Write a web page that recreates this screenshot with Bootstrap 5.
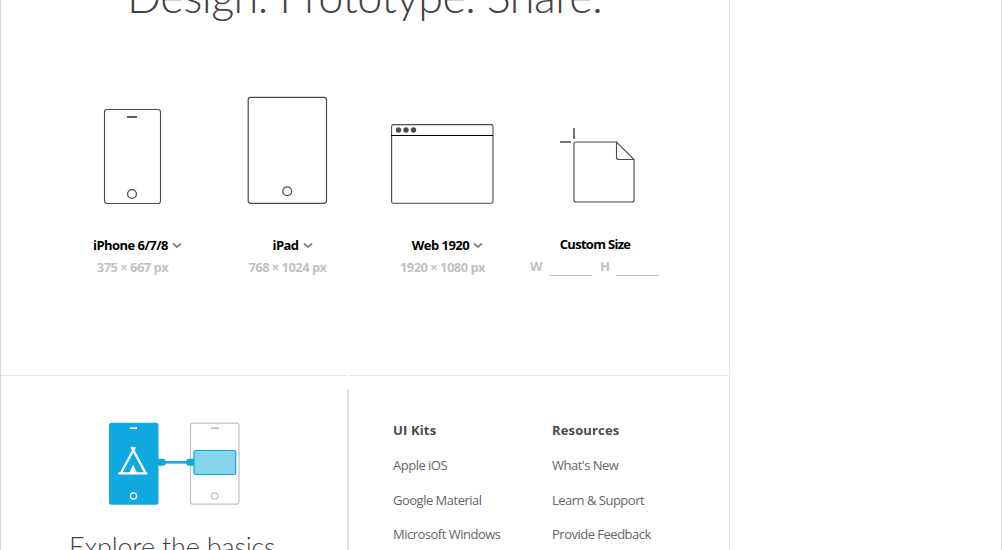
<!DOCTYPE html>
<html lang="en">
<head>
<meta charset="utf-8">
<meta name="viewport" content="width=device-width, initial-scale=1">
<title>Start screen</title>
<link href="https://cdn.jsdelivr.net/npm/bootstrap@5.3.0/dist/css/bootstrap.min.css" rel="stylesheet">
<style>
body{font-family:"Open Sans",sans-serif;background:#fff;color:#4b4b4b;height:550px}
svg{display:block}
.window{width:1002px;height:550px;border-left:1px solid #d6d6d6;border-right:1px solid #d6d6d6}
.start{width:729px;height:550px}
.presets{height:376px;border-right:1px solid #e8e8e8;border-bottom:1px solid #e8e8e8;border-bottom-right-radius:3px}
.hero-title{font-family:Lato,sans-serif;font-weight:300;font-size:45px;line-height:50px;height:50px;margin:-29px 0 0 126px;letter-spacing:-.58px;white-space:nowrap;color:#434343}
.devices{padding:69px 0 0 54px}
.device{width:155px;text-align:center;white-space:nowrap}
.device-name{font-size:13px;line-height:20px;font-weight:700;color:#000;margin-top:25px;padding-left:10px;letter-spacing:-.53px}
.device-size{font-size:13px;line-height:20px;font-weight:700;color:#c2c2c2;margin-top:2px;letter-spacing:-.55px}
.custom .device-name{margin-top:24px;padding:0 5px 0 0;letter-spacing:-.7px}
.size-field{height:20px;border-bottom:1px solid #c6c6c6}
.size-label{width:12px;text-align:left}
.size-label-w{margin-left:10px}
.footer-panels{height:174px;border-right:1px solid #e8e8e8}
.learn{width:346px}
.learn-title{font-family:Lato,sans-serif;font-weight:300;font-size:27px;line-height:34px;margin:24px 0 0 68px;white-space:nowrap;letter-spacing:-.18px;color:#434343}
.divider{width:2px;border-top:14px solid #fff;margin-top:-1px;padding-top:1px;background:#e3e3e3}
.links{font-size:13px;line-height:20px;color:#666;padding:44px 0 0 44px;white-space:nowrap;letter-spacing:-.5px}
.links ul{width:159px}
.links li{margin-bottom:14.700px}
.links h2{font-size:13px;line-height:20px;font-weight:700;color:#4b4b4b;letter-spacing:.15px;margin-bottom:15px}
</style>
</head>
<body>
<div class="window overflow-hidden">
<main class="start overflow-hidden">
  <section class="presets overflow-hidden">
    <h1 class="hero-title">Design. Prototype. Share.</h1>
    <div class="devices d-flex">
      <div class="device">
        <svg width="155" height="120" viewBox="55 90 155 120" fill="none" stroke="#4b4b4b"><rect x="104.5" y="109.5" width="56" height="94" rx="2.5" stroke-width="1.1"/><path d="M127 117h10" stroke-width="1.8"/><circle cx="132" cy="194" r="4.4" stroke-width="1.3"/></svg>
        <div class="device-name d-flex justify-content-center align-items-center"><span>iPhone 6/7/8</span><svg class="ms-1" width="10" height="8" viewBox="0 0 10 8" fill="none" stroke="#858585" stroke-width="1.8"><path d="M1 2.500l4 3.500 4-3.500"/></svg></div>
        <div class="device-size">375 × 667 px</div>
      </div>
      <div class="device">
        <svg width="155" height="120" viewBox="210 90 155 120" fill="none" stroke="#4b4b4b"><rect x="248.200" y="97.3" width="78.300" height="106" rx="2.5" stroke-width="1.2"/><circle cx="287.2" cy="191.2" r="4.4" stroke-width="1.3"/></svg>
        <div class="device-name d-flex justify-content-center align-items-center"><span>iPad</span><svg class="ms-1" width="10" height="8" viewBox="0 0 10 8" fill="none" stroke="#858585" stroke-width="1.8"><path d="M1 2.500l4 3.500 4-3.500"/></svg></div>
        <div class="device-size">768 × 1024 px</div>
      </div>
      <div class="device">
        <svg width="155" height="120" viewBox="365 90 155 120" fill="none" stroke="#4b4b4b"><rect x="391.6" y="124.6" width="101.4" height="78.6" rx="1.8" stroke-width="1.1"/><path d="M391 135.5h102" stroke="#000"/><g fill="#4b4b4b" stroke="none"><circle cx="398.5" cy="130" r="2.7"/><circle cx="406" cy="130" r="2.7"/><circle cx="413.5" cy="130" r="2.7"/></g></svg>
        <div class="device-name d-flex justify-content-center align-items-center"><span>Web 1920</span><svg class="ms-1" width="10" height="8" viewBox="0 0 10 8" fill="none" stroke="#858585" stroke-width="1.8"><path d="M1 2.500l4 3.500 4-3.500"/></svg></div>
        <div class="device-size">1920 × 1080 px</div>
      </div>
      <div class="device custom">
        <svg width="155" height="120" viewBox="520 90 155 120" fill="none" stroke="#4b4b4b" stroke-width="1.1"><path d="M616.5 142H576q-2 0-2 2v56q0 2 2 2h56q2 0 2-2v-40.5L616.5 142v15.500q0 2 2 2H634"/><path d="M560 142h11M574 128v11" stroke-width="1.5"/></svg>
        <div class="device-name">Custom Size</div>
        <div class="device-size d-flex"><span class="size-label size-label-w">W</span><span class="size-field ms-2" style="width:42px"></span><span class="size-label ms-2">H</span><span class="size-field ms-1" style="width:43px"></span></div>
      </div>
    </div>
  </section>
  <div class="footer-panels d-flex">
    <section class="learn">
      <svg width="346" height="130" viewBox="1 376 346 130"><rect x="109" y="422.700" width="49.500" height="82" rx="2.500" fill="#0fa9df"/><path d="M130 428.200h7" stroke="#fff" stroke-width="1.700"/><circle cx="133.500" cy="496" r="3.100" fill="none" stroke="#fff" stroke-width="1.300"/><g fill="none" stroke="#fff" stroke-width="2.300"><path d="M131.500 447l14 26M135 447l-14 26M118.300 473.400h29"/></g><path d="M133.200 464.500l4.500 9.500h-9z" fill="#fff"/><rect x="190.500" y="423.200" width="48.500" height="81" rx="2.500" fill="#fff" stroke="#c1c1c1" stroke-width="1.200"/><path d="M211 428.200h8" stroke="#c1c1c1" stroke-width="1.700"/><circle cx="214.700" cy="496" r="3.200" fill="none" stroke="#c1c1c1" stroke-width="1.300"/><path d="M162 462.300h28" stroke="#0fa9df" stroke-width="2.600"/><path d="M158 458.800h4.500a3.500 3.500 0 0 1 0 7H158zM194 458.800h-4.500a3.500 3.500 0 0 0 0 7h4.500z" fill="#0fa9df"/><rect x="194" y="450.500" width="41.700" height="24" rx="1.500" fill="#86d3ec" stroke="#0fa9df" stroke-width="1.200"/></svg>
      <h2 class="learn-title">Explore the basics</h2>
    </section>
    <div class="divider"></div>
    <nav class="links d-flex">
      <ul class="list-unstyled"><li><h2>UI Kits</h2></li><li>Apple iOS</li><li>Google Material</li><li>Microsoft Windows</li></ul>
      <ul class="list-unstyled"><li><h2>Resources</h2></li><li>What's New</li><li>Learn &amp; Support</li><li>Provide Feedback</li></ul>
    </nav>
  </div>
</main>
</div>
<script src="https://cdn.jsdelivr.net/npm/bootstrap@5.3.0/dist/js/bootstrap.bundle.min.js"></script>
</body>
</html>
